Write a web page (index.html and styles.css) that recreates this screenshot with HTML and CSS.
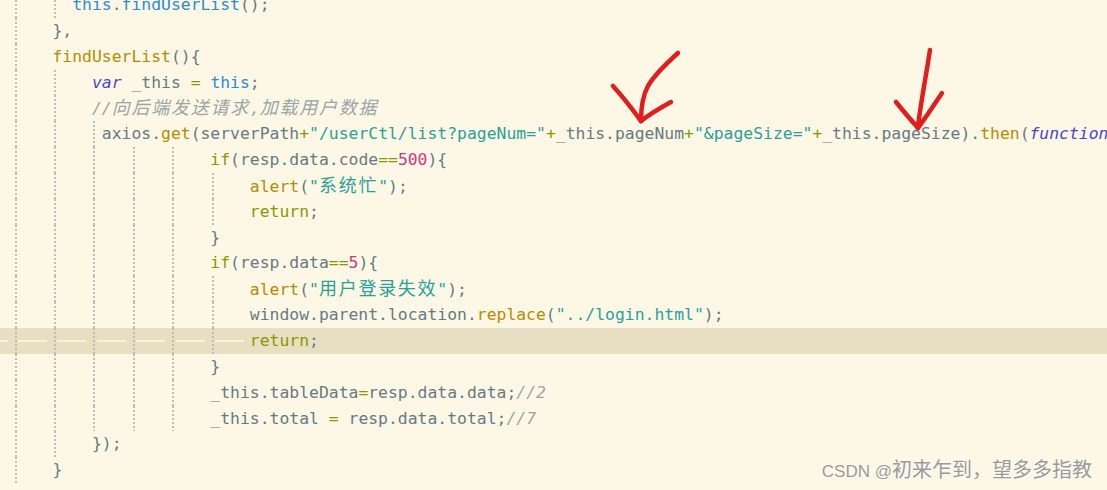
FILE: index.html
```html
<!DOCTYPE html>
<html lang="zh-CN">
<head>
    <meta charset="UTF-8">
    <meta name="viewport" content="width=device-width, initial-scale=1.0">
    <title>findUserList</title>
    <link rel="stylesheet" href="styles.css">
</head>
<body>
    <div class="editor">
        <div class="ln"><span class="g"></span><span class="g g2"></span><span class="k">this</span>.<span class="k">findUserList</span>();</div>
        <div class="ln"><span class="g"></span>},</div>
        <div class="ln"><span class="g"></span><span class="f">findUserList</span>(){</div>
        <div class="ln"><span class="g"></span><span class="g"></span><span class="v">var</span> _this <span class="o">=</span> <span class="k">this</span>;</div>
        <div class="ln"><span class="g"></span><span class="g"></span><span class="c">//<span class="zh">向后端发送请求</span>,<span class="zh">加载用户数据</span></span></div>
        <div class="ln"><span class="g"></span><span class="g"></span><span class="g g1"></span>axios.<span class="f">get</span>(serverPath<span class="o">+</span><span class="s">"/userCtl/list?pageNum="</span><span class="o">+</span>_this.pageNum<span class="o">+</span><span class="s">"&amp;pageSize="</span><span class="o">+</span>_this.pageSize).<span class="f">then</span>(<span class="v">function</span>(resp){</div>
        <div class="ln"><span class="g"></span><span class="g"></span><span class="g"></span><span class="g"></span><span class="g"></span><span class="r">if</span>(resp.data.code<span class="o">==</span><span class="n">500</span>){</div>
        <div class="ln"><span class="g"></span><span class="g"></span><span class="g"></span><span class="g"></span><span class="g"></span><span class="g"></span><span class="f">alert</span>(<span class="s">"<span class="zh">系统忙</span>"</span>);</div>
        <div class="ln"><span class="g"></span><span class="g"></span><span class="g"></span><span class="g"></span><span class="g"></span><span class="g"></span><span class="r">return</span>;</div>
        <div class="ln"><span class="g"></span><span class="g"></span><span class="g"></span><span class="g"></span><span class="g"></span>}</div>
        <div class="ln"><span class="g"></span><span class="g"></span><span class="g"></span><span class="g"></span><span class="g"></span><span class="r">if</span>(resp.data<span class="o">==</span><span class="n">5</span>){</div>
        <div class="ln"><span class="g"></span><span class="g"></span><span class="g"></span><span class="g"></span><span class="g"></span><span class="g"></span><span class="f">alert</span>(<span class="s">"<span class="zh">用户登录失效</span>"</span>);</div>
        <div class="ln"><span class="g"></span><span class="g"></span><span class="g"></span><span class="g"></span><span class="g"></span><span class="g"></span>window.parent.location.<span class="f">replace</span>(<span class="s">"../login.html"</span>);</div>
        <div class="ln cur"><span class="g"></span><span class="g"></span><span class="g"></span><span class="g"></span><span class="g"></span><span class="g"></span><span class="r">return</span>;</div>
        <div class="ln"><span class="g"></span><span class="g"></span><span class="g"></span><span class="g"></span><span class="g"></span>}</div>
        <div class="ln"><span class="g"></span><span class="g"></span><span class="g"></span><span class="g"></span><span class="g"></span>_this.tableData<span class="o">=</span>resp.data.data;<span class="c">//2</span></div>
        <div class="ln"><span class="g"></span><span class="g"></span><span class="g"></span><span class="g"></span><span class="g"></span>_this.total <span class="o">=</span> resp.data.total;<span class="c">//7</span></div>
        <div class="ln"><span class="g"></span><span class="g"></span>});</div>
        <div class="ln"><span class="g"></span>}</div>
    </div>

    <!-- hand drawn arrows -->
    <svg class="arrows" width="1107" height="490" viewBox="0 0 1107 490">
        <g fill="none" stroke="#e11d1d" stroke-width="4.5" stroke-linecap="round" stroke-linejoin="round">
            <path d="M678 53 C668 62 655 74 648 86 C642 97 641 110 641 121"/>
            <path d="M613 86 C624 98 633 110 641 121"/>
            <path d="M671 102 C660 108 650 114 641 121"/>
            <path d="M930 50 C926 76 921 102 918 126"/>
            <path d="M896 102 C904 112 911 120 918 128"/>
            <path d="M942 93 C934 105 926 117 918 128"/>
        </g>
    </svg>

    <div class="mark">CSDN @<span class="mz">初来乍到，望多多指教</span></div>
</body>
</html>
```

FILE: styles.css
```css
body {
    margin: 0;
    background-color: #fdf8e6;
    overflow: hidden;
}

.editor {
    font-family: "DejaVu Sans Mono", "Noto Sans CJK SC", monospace;
    font-size: 16.4px;
    color: #657b83;
    margin-top: -8px;
}

.ln {
    height: 25.85px;
    line-height: 25.85px;
    padding-left: 13px;
    white-space: pre;
    overflow: hidden;
}

/* indent guide, one per 4 columns */
.g {
    display: inline-block;
    width: 4ch;
    height: 25.85px;
    vertical-align: top;
    background: repeating-linear-gradient(#c2beb2 0 2px, transparent 2px 4px) 1.5px 0 / 2px 100% no-repeat;
}
.g2 { width: 2ch; }
.g1 { width: 1ch; }

.cur {
    background-color: #e8dfc3;
}
.cur::before {
    content: "";
    display: inline-block;
    width: 8px;
    height: 2px;
    margin-left: -13px;
    margin-right: 5px;
    vertical-align: middle;
    background-color: #f8f1dc;
}
.cur .g {
    background:
        repeating-linear-gradient(#c2beb2 0 2px, transparent 2px 4px) 1.5px 0 / 2px 100% no-repeat,
        linear-gradient(#f8f1dc, #f8f1dc) 5px 12px / 29px 2px no-repeat;
}

.k { color: #2b8bd4; }
.f { color: #b88a00; }
.v { color: #4745cc; font-style: italic; }
.s { color: #2aa198; }
.o { color: #859900; }
.n { color: #d33682; }
.r { color: #879a00; }
.c { color: #98a6a6; font-style: italic; }

.zh {
    font-size: 18px;
    letter-spacing: 1.74px;
}

.arrows {
    position: absolute;
    left: 0;
    top: 0;
    pointer-events: none;
}

.mark {
    position: absolute;
    right: 15px;
    bottom: 7px;
    font-family: "Liberation Sans", "Noto Sans CJK SC", sans-serif;
    font-size: 17px;
    color: #9a9a9a;
    text-shadow: 0 0 2px #fff;
}
.mark .mz {
    font-size: 20px;
}
```
